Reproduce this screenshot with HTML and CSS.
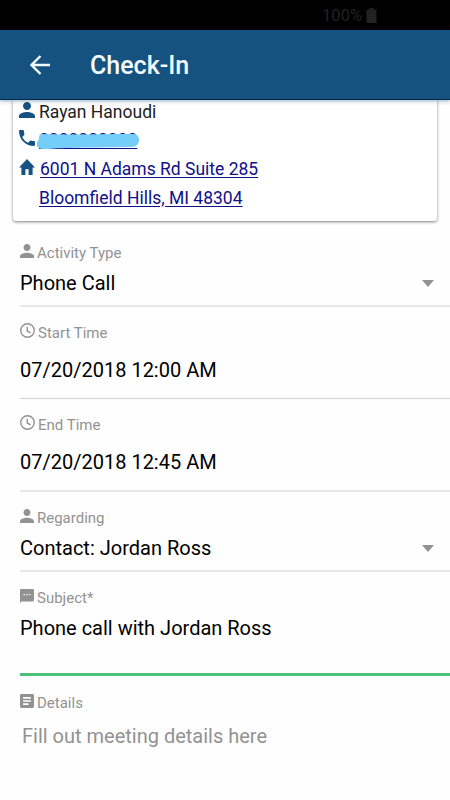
FILE: index.html
```html
<!DOCTYPE html>
<html lang="en">
<head>
  <meta charset="UTF-8">
  <meta name="viewport" content="width=device-width, initial-scale=1.0">
  <title>Check-In</title>
  <link rel="stylesheet" href="styles.css">
</head>
<body>

<div class="status-bar">
  <span>100%</span>
  <svg class="battery" viewBox="0 0 10 15"><path d="M3 0h4v1.500h3V15H0V1.500h3z"/></svg>
</div>

<header class="toolbar">
  <svg class="back" viewBox="0 0 20 20"><path d="M20 10H1.500M10.500 1L1.500 10l9 9"/></svg>
  <h1>Check-In</h1>
</header>

<main>
  <!-- Contact card -->
  <section class="card">
    <div class="card-row">
      <svg class="icon" viewBox="4 4 16 16"><path d="M12 12c2.210 0 4-1.790 4-4s-1.790-4-4-4-4 1.790-4 4 1.790 4 4 4zm0 2c-2.670 0-8 1.340-8 4v2h16v-2c0-2.660-5.330-4-8-4z"/></svg>
      <span class="name">Rayan Hanoudi</span>
    </div>
    <div class="card-row">
      <svg class="icon" viewBox="3 3 18 18"><path d="M6.620 10.790c1.440 2.830 3.760 5.140 6.590 6.590l2.200-2.200c.27-.27.67-.36 1.020-.24 1.120.37 2.330.57 3.570.57.55 0 1 .45 1 1V20c0 .55-.45 1-1 1-9.390 0-17-7.610-17-17 0-.55.45-1 1-1h3.500c.55 0 1 .45 1 1 0 1.250.2 2.450.57 3.570.11.35.03.74-.25 1.020l-2.200 2.200z"/></svg>
      <a class="phone" href="#">0000000000
        <svg class="marker" viewBox="0 0 102 14" preserveAspectRatio="none"><path d="M5 0C30 1 65 0 96 0c8 0 8 10 1 12-25 1-50 0-64 1-12 0-19 1-28 1-7-1-6-6-3-9 0-3 0-5 3-5z"/></svg>
      </a>
    </div>
    <div class="card-row">
      <svg class="icon" viewBox="2 3 20 17" preserveAspectRatio="none"><path d="M10 20v-6h4v6h5v-8h3L12 3 2 12h3v8z"/></svg>
      <a class="street" href="#">6001 N Adams Rd Suite 285</a>
    </div>
    <div class="card-row">
      <a class="city" href="#">Bloomfield Hills, MI 48304</a>
    </div>
  </section>

  <!-- Check-in form -->
  <form>
    <div class="field first">
      <div class="label">
        <svg class="small-icon" viewBox="4 4 16 16"><path d="M12 12c2.210 0 4-1.790 4-4s-1.790-4-4-4-4 1.790-4 4 1.790 4 4 4zm0 2c-2.670 0-8 1.340-8 4v2h16v-2c0-2.660-5.330-4-8-4z"/></svg>
        <span>Activity Type</span>
      </div>
      <div class="value">Phone Call<i class="caret"></i></div>
    </div>
    <div class="field time start">
      <div class="label">
        <svg class="clock" viewBox="0 0 16 16"><circle cx="8" cy="8" r="7.200"/><path d="M7.700 4v4.500l3.500 2"/></svg>
        <span>Start Time</span>
      </div>
      <div class="value">07/20/2018 12:00 AM</div>
    </div>
    <div class="field time">
      <div class="label">
        <svg class="clock" viewBox="0 0 16 16"><circle cx="8" cy="8" r="7.200"/><path d="M7.700 4v4.500l3.500 2"/></svg>
        <span>End Time</span>
      </div>
      <div class="value">07/20/2018 12:45 AM</div>
    </div>
    <div class="field">
      <div class="label">
        <svg class="small-icon" viewBox="4 4 16 16"><path d="M12 12c2.210 0 4-1.790 4-4s-1.790-4-4-4-4 1.790-4 4 1.790 4 4 4zm0 2c-2.670 0-8 1.340-8 4v2h16v-2c0-2.660-5.330-4-8-4z"/></svg>
        <span>Regarding</span>
      </div>
      <div class="value">Contact: Jordan Ross<i class="caret"></i></div>
    </div>
    <div class="field subject">
      <div class="label">
        <svg class="small-icon" viewBox="2 2 20 20"><path d="M20 2H4c-1.100 0-2 .9-2 2v18l2-2h16c1.100 0 2-.9 2-2V4c0-1.100-.9-2-2-2zM9 11H7V9h2v2zm4 0h-2V9h2v2zm4 0h-2V9h2v2z"/></svg>
        <span>Subject*</span>
      </div>
      <div class="value">Phone call with Jordan Ross</div>
    </div>
    <div class="field details">
      <div class="label">
        <svg class="small-icon" viewBox="3 3 18 18"><path d="M19 3H5c-1.100 0-2 .9-2 2v14c0 1.100.9 2 2 2h14c1.100 0 2-.9 2-2V5c0-1.100-.9-2-2-2zm-5 14H7v-2h7v2zm3-4H7v-2h10v2zm0-4H7V7h10v2z"/></svg>
        <span>Details</span>
      </div>
      <div class="value">Fill out meeting details here</div>
    </div>
  </form>
</main>

</body>
</html>
```
FILE: styles.css
```css
* {
  box-sizing: border-box;
}
body {
  margin: 0;
  background-color: #fefefe;
  font-family: Roboto, sans-serif;
  color: #000;
  height: 800px;
  overflow: hidden;
}
svg {
  display: block;
  flex: none;
}
.status-bar {
  display: flex;
  align-items: center;
  height: 30px;
  padding: 1px 73px 0 0;
  justify-content: flex-end;
  gap: 4px;
  background-color: #000;
  color: #222;
  font-size: 16.5px;
  line-height: 28px;
}
.battery {
  width: 11px;
  height: 15px;
  fill: #222;
}
.toolbar {
  position: relative;
  display: flex;
  align-items: center;
  height: 70px;
  padding-left: 30px;
  gap: 40px;
  background-color: #15527f;
  border-bottom: 1px solid #062c50;
  box-shadow: 0 1px 4px rgba(0, 50, 100, 0.4);
}
.toolbar h1 {
  margin: 0;
  padding-top: 1px;
  color: #f3fbff;
  font-size: 25px;
  font-weight: 500;
}
.back {
  width: 20px;
  height: 20px;
  fill: none;
  stroke: #f3fbff;
  stroke-width: 2.4;
}
.card {
  height: 121px;
  margin: 0 13px;
  padding: 0 6px;
  background-color: #fff;
  border-radius: 0 0 3px 3px;
  box-shadow: 0 1px 3px rgba(0, 0, 0, 0.5);
}
.card-row {
  display: flex;
  align-items: center;
  height: 29px;
  font-size: 17.5px;
  line-height: 24px;
}
.card-row:first-child {
  height: 25px;
  padding-bottom: 1px;
}
.icon {
  width: 16px;
  height: 16px;
  margin-bottom: 3px;
  fill: #15527f;
}
.card-row:first-child .icon {
  margin-bottom: 5px;
}
.name {
  margin-left: 4px;
  color: #222;
}
.card a {
  color: #10108a;
  text-underline-offset: 2px;
}
.phone {
  position: relative;
  margin-left: 4px;
}
.marker {
  position: absolute;
  left: -2px;
  top: 6px;
  width: 102px;
  height: 15px;
  fill: #75cdfa;
}
.street {
  margin-left: 5px;
}
.city {
  margin-left: 20px;
}
.field {
  margin-left: 20px;
  padding: 16px 0 10px;
  border-bottom: 2px solid #e8e8e8;
}
.first {
  padding-top: 22px;
}
.label {
  display: flex;
  gap: 3px;
  height: 20px;
  color: #929292;
  font-size: 15px;
  line-height: 20px;
}
.small-icon {
  width: 14px;
  height: 14px;
  margin-top: 1px;
  fill: #929292;
}
.clock {
  width: 15px;
  height: 15px;
  fill: none;
  stroke: #929292;
  stroke-width: 1.5;
}
.value {
  display: flex;
  align-items: center;
  justify-content: space-between;
  height: 24px;
  margin-top: 8px;
  padding-right: 16px;
  font-size: 20px;
  line-height: 24px;
}
.caret {
  border: 6px solid transparent;
  border-top: 7px solid #929292;
  border-bottom: 0;
}
.time {
  padding-bottom: 16px;
}
.time .value {
  margin-top: 15px;
}
.start {
  border-bottom: 1px solid #d2d2d2;
}
.subject {
  padding-bottom: 33px;
  border-bottom: 3px solid #4cbf79;
}
.details {
  padding-top: 17px;
  border-bottom: none;
}
.details .value {
  margin-top: 11px;
  padding-left: 2px;
  color: #929292;
}
```
